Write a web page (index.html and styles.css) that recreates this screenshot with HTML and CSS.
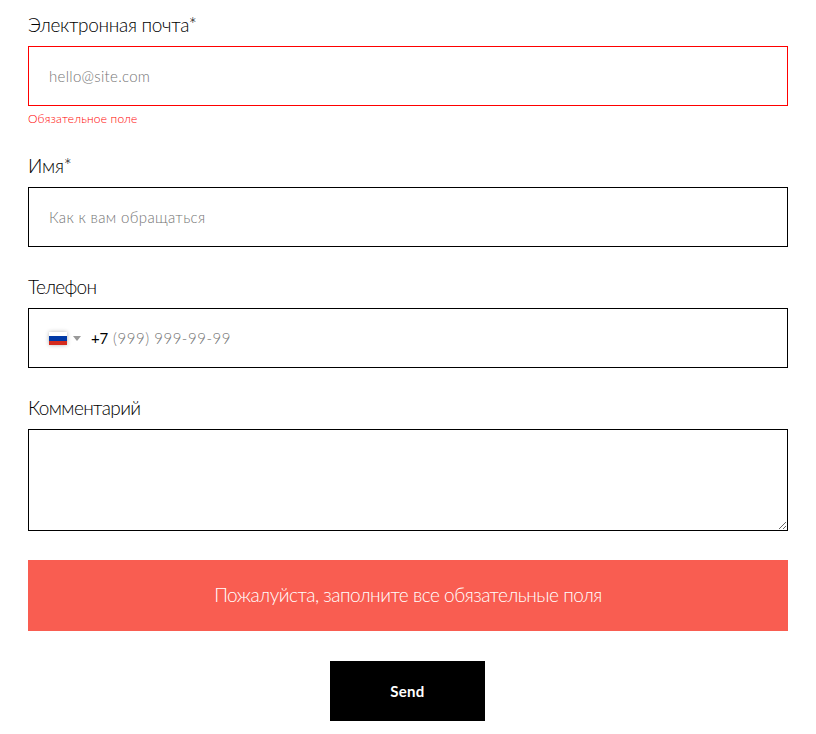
FILE: index.html
```html
<!DOCTYPE html>
<html lang="ru">
<head>
<meta charset="utf-8">
<title>Форма</title>
<link rel="stylesheet" href="styles.css">
</head>
<body>
<form class="form" novalidate>
  <div class="group group-error">
    <label class="label" for="email"><span class="l-email">Электронная почта*</span></label>
    <input class="field p-email" id="email" type="email" placeholder="hello@site.com">
    <div class="error">Обязательное поле</div>
  </div>
  <div class="group">
    <label class="label" for="name"><span class="l-name">Имя*</span></label>
    <input class="field p-name" id="name" type="text" placeholder="Как к вам обращаться">
  </div>
  <div class="group">
    <label class="label" for="phone"><span class="l-phone">Телефон</span></label>
    <div class="field phone">
      <span class="flag"><i class="white"></i><i class="blue"></i><i class="red"></i></span>
      <span class="arrow"></span>
      <span class="code">+7</span>
      <input class="number" id="phone" type="tel" placeholder="(999) 999-99-99">
    </div>
  </div>
  <div class="group group-comment">
    <label class="label" for="comment"><span class="l-comment">Комментарий</span></label>
    <textarea class="field area" id="comment"></textarea>
  </div>
  <div class="alert"><span class="alert-text">Пожалуйста, заполните все обязательные поля</span></div>
  <button class="send" type="button">Send</button>
</form>
</body>
</html>
```
FILE: styles.css
```css
* { box-sizing: border-box; }
body { margin: 0; background: #fff; font-family: Lato, "Open Sans", sans-serif; font-weight: 300; color: #000; }
.form { width: 760px; margin: 0 28px; padding-top: 11px; display: flex; flex-direction: column; }
.group { display: flex; flex-direction: column; height: 121px; }
.group-error { height: 141px; }
.group-comment { height: 166px; }
.label { font-size: 19px; line-height: 27px; height: 35px; white-space: nowrap; }
.l-email { letter-spacing: -.31px; }
.l-name { letter-spacing: -.2px; }
.l-phone { letter-spacing: -.7px; }
.l-comment { letter-spacing: -.62px; }
.field { display: block; width: 100%; height: 60px; margin: 0; padding: 0 20px; border: 1px solid #000; border-radius: 0; background: #fff; font: 300 15px/20px Lato, "Open Sans", sans-serif; outline: none; }
.group-error .field { border-color: #f00; }
.field::placeholder, .number::placeholder { color: #757575; opacity: 1; }
.p-email { letter-spacing: .3px; }
.p-name { letter-spacing: .35px; }
.error { margin-top: 4px; font-size: 12px; line-height: 17px; color: #f00; letter-spacing: .18px; white-space: nowrap; }
.phone { display: flex; align-items: center; padding-bottom: 1px; }
.flag { display: flex; flex-direction: column; width: 18px; height: 13px; margin-top: 1px; box-shadow: 0 0 4px rgba(0, 0, 0, .3); }
.flag i { flex: none; height: 4px; }
.white { background: #fff; }
.flag .blue { background: #0039a6; height: 5px; }
.red { background: #d52b1e; }
.arrow { margin: 1px 10px 0 6px; border: 4px solid transparent; border-top: 5px solid #999; border-bottom: 0; }
.code { width: 22px; font-weight: 400; letter-spacing: -.3px; }
.number { flex: 1; border: 0; padding: 0; outline: 0; font: inherit; letter-spacing: .54px; }
.area { height: 102px; resize: vertical; }
.alert { height: 71px; line-height: 70px; background: #f95d51; color: #fff; text-align: center; font-size: 19px; white-space: nowrap; }
.alert-text { letter-spacing: -.49px; }
.send { width: 155px; height: 60px; margin: 30px 0 0 302px; padding: 0; border: 0; background: #000; color: #fff; font: 700 15px/20px Lato, sans-serif; letter-spacing: .3px; }
```
